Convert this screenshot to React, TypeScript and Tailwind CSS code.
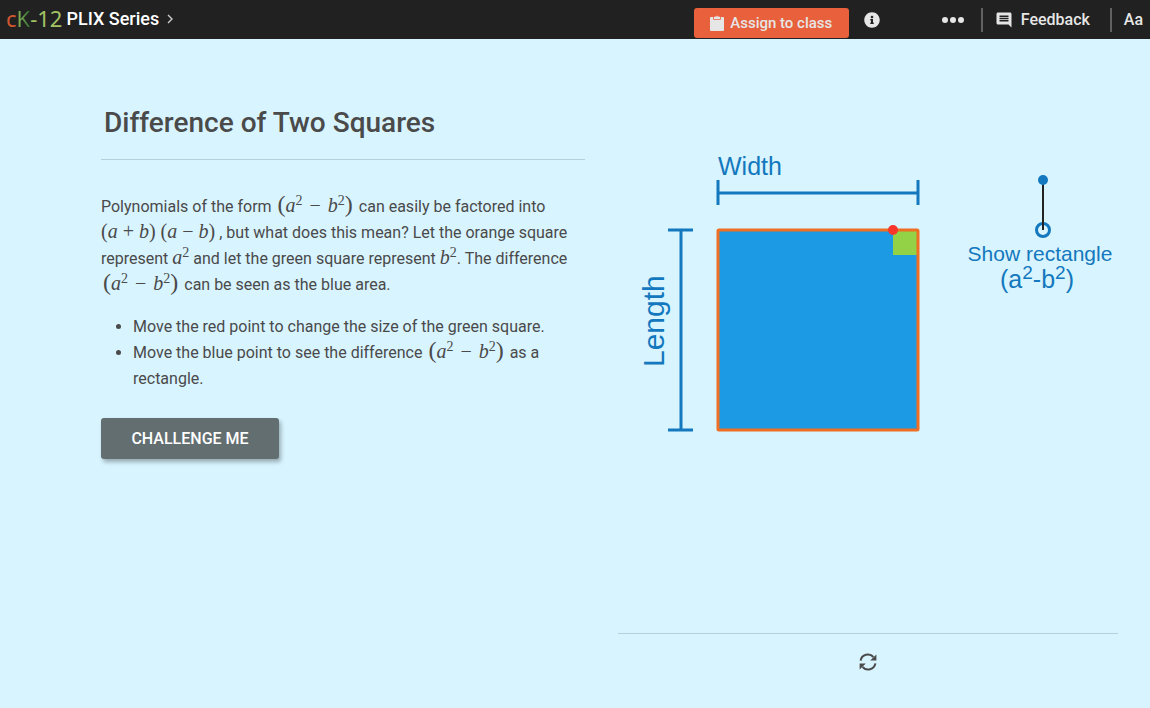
import type { ReactNode } from "react";
import { FaInfoCircle } from "react-icons/fa";
import { MdInsertComment } from "react-icons/md";

const ClipboardIcon = () => (
  <svg viewBox="0 0 14 16" className="h-4 w-3.5" aria-hidden="true">
    <rect y="2" width="14" height="14" rx="1" fill="currentColor" />
    <path d="M3.5 1.8v2.6h7V1.8" fill="none" stroke="#e8603c" strokeWidth="0.8" />
    <path
      d="M4 4V1.8h1.4a1.7 1.7 0 0 1 3.2 0H10V4zM7 1.3a.6.6 0 1 0 0 1.2.6.6 0 0 0 0-1.2z"
      fill="currentColor"
      fillRule="evenodd"
    />
  </svg>
);

const RefreshIcon = () => (
  <svg viewBox="0 0 18 18" className="h-[18px] w-[18px]" aria-hidden="true">
    <g fill="none" stroke="currentColor" strokeWidth="2">
      <path d="M1.6 7.6A7.4 7.4 0 0 1 14.4 4" />
      <path d="M16.4 10.4A7.4 7.4 0 0 1 3.6 14" />
    </g>
    <path d="M17.4 1.4v6.2h-6.2z" fill="currentColor" />
    <path d="M.6 16.6v-6.2h6.2z" fill="currentColor" />
  </svg>
);

/* MATH */
const Formula = ({ children }: { children: ReactNode }) => (
  <span className="font-['Liberation_Serif',serif] text-[20px] leading-0 whitespace-nowrap">
    {children}
  </span>
);

const Squared = ({ name }: { name: string }) => (
  <>
    <i>{name}</i>
    <sup className="text-[14px] leading-0">2</sup>
  </>
);

const DifferenceOfSquares = () => (
  <Formula>
    <span className="ml-0.5 text-[24px] leading-0">(</span>
    <Squared name="a" />
    <span className="mx-[7px]">−</span>
    <Squared name="b" />
    <span className="mr-0.5 text-[24px] leading-0">)</span>
  </Formula>
);

const Header = () => (
  <header className="flex h-[39px] items-center bg-[#212121] font-medium text-[#e6e6e6]">
    <a href="#" className="flex pb-1 pl-1.5 font-['Noto_Sans',sans-serif] text-[22px] leading-none font-normal">
      <span className="text-[#d0562f]">c</span>
      <span className="bg-linear-to-r from-[#8fbf5a] to-[#2f6b34] bg-clip-text text-transparent">K</span>
      <span className="text-[#a3c464]">-12</span>
    </a>
    <a href="#" className="ml-1 flex items-center gap-2 pb-0.5 text-[18px] text-white">
      PLIX Series
      <svg viewBox="0 0 6 10" className="h-2.5 w-1.5" fill="none" stroke="#cccccc" strokeWidth="1.4" aria-hidden="true">
        <path d="M1 1l4 4-4 4" />
      </svg>
    </a>
    <div className="ml-auto flex items-center">
      <button className="mt-[7px] flex h-[30px] w-[155px] items-center justify-center gap-1.5 rounded-[3px] bg-[#e8603c] text-[15px]">
        <ClipboardIcon />
        Assign to class
      </button>
      <button aria-label="About" className="ml-[15px] text-base">
        <FaInfoCircle />
      </button>
      <button aria-label="More" className="ml-[62px] flex gap-0.5 pr-[17px]">
        <span className="size-1.5 rounded-full bg-current" />
        <span className="size-1.5 rounded-full bg-current" />
        <span className="size-1.5 rounded-full bg-current" />
      </button>
      <button className="flex h-6 w-[131px] items-center gap-2 border-x-2 border-[#616161] pl-3 text-base">
        <MdInsertComment size={18} />
        Feedback
      </button>
      <button className="pr-[7px] pl-3 text-base">Aa</button>
    </div>
  </header>
);

/* INTERACTIVE BOARD */
const Board = () => (
  <svg
    viewBox="0 0 500 594"
    className="block w-full font-['Liberation_Sans',sans-serif]"
    role="img"
    aria-label="Square with adjustable width and length"
  >
    <g stroke="#1378bd" strokeWidth="3">
      <path d="M100 154H300M100 141v25M300 141v25" />
      <path d="M63 191V391M50 191h25M50 391h25" />
    </g>
    <rect x="100" y="191" width="200" height="200" fill="#1c9ae3" />
    <rect x="275" y="191" width="25" height="25" fill="#93d247" />
    <rect x="100" y="191" width="200" height="200" rx="1" fill="none" stroke="#ee6e24" strokeWidth="3" />
    <circle cx="275" cy="191" r="5" fill="#f8362c" />

    <circle cx="425" cy="191" r="6.5" fill="none" stroke="#1378bd" strokeWidth="3" />
    <path d="M425 141v50" stroke="#222222" strokeWidth="2" />
    <circle cx="425" cy="141" r="5" fill="#1378bd" />

    <g fill="#1378bd">
      <text x="100" y="136" fontSize="25">Width</text>
      <text transform="translate(46 328) rotate(-90)" fontSize="30">Length</text>
      <text x="422" y="222" fontSize="21" textAnchor="middle">Show rectangle</text>
      <text x="419" y="249" fontSize="25" textAnchor="middle">
        (a
        <tspan fontSize="19" dy="-9">2</tspan>
        <tspan dy="9">-b</tspan>
        <tspan fontSize="19" dy="-9">2</tspan>
        <tspan dy="9">)</tspan>
      </text>
    </g>
  </svg>
);

export default function App() {
  return (
    <div className="min-h-screen bg-[#d8f4ff] font-[Roboto,sans-serif] text-[#4a4a4a]">
      <Header />
      <main className="flex gap-[33px] pr-8 pl-[101px]">
        <section className="flex-[484] basis-0 pt-[66px]">
          <h1 className="border-b border-[#b3d1dc] pb-[18px] pl-[3px] text-[28px] leading-9 font-medium">
            Difference of Two Squares
          </h1>
          <p className="mt-[34px] text-base leading-[26px]">
            Polynomials of the form <DifferenceOfSquares /> can easily be factored into{" "}
            <Formula>
              (<i>a</i> + <i>b</i>) (<i>a</i> − <i>b</i>)
            </Formula>{" "}
            , but what does this mean? Let the orange square represent{" "}
            <Formula><Squared name="a" /></Formula> and let the green square represent{" "}
            <Formula><Squared name="b" /></Formula>. The difference <DifferenceOfSquares /> can be
            seen as the blue area.
          </p>
          <ul className="mt-4 list-disc pl-8 text-base leading-[26px]">
            <li>Move the red point to change the size of the green square.</li>
            <li>
              Move the blue point to see the difference <DifferenceOfSquares /> as a rectangle.
            </li>
          </ul>
          <button className="mt-[26px] h-[41px] w-[178px] rounded-[3px] bg-[#626e70] text-base font-medium text-white shadow-[2px_3px_4px_rgba(0,0,0,0.3)]">
            CHALLENGE ME
          </button>
        </section>
        <section className="flex-[500] basis-0">
          <Board />
          <div className="flex justify-center border-t border-[#b3d1dc] pt-[19px]">
            <button aria-label="Reset">
              <RefreshIcon />
            </button>
          </div>
        </section>
      </main>
    </div>
  );
}
